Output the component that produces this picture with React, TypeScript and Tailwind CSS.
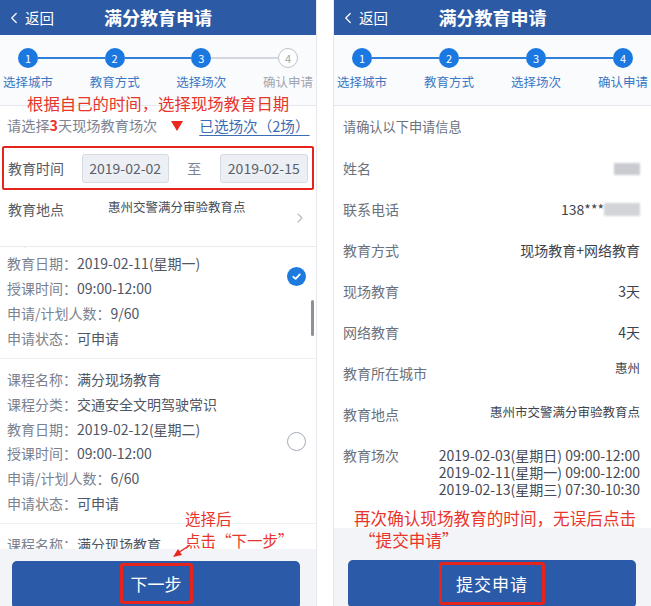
import React from 'react';
import { ChevronLeft, ChevronRight } from 'lucide-react';

const FONT = { fontFamily: '"Noto Sans CJK SC", "Noto Sans", sans-serif' };

const STEPS = ['选择城市', '教育方式', '选择场次', '确认申请'];

function Header() {
  return (
    <div className="relative h-[35px] shrink-0 bg-[#2c5aa5] flex items-center text-white">
      <div className="flex items-center pl-[5px]">
        <ChevronLeft className="w-[18px] h-[18px]" strokeWidth={1.6} />
        <span className="text-[14.5px] ml-[2px]">返回</span>
      </div>
      <div className="absolute inset-0 flex items-center justify-center text-[18px] font-bold pointer-events-none">
        满分教育申请
      </div>
    </div>
  );
}

function Steps({ active }: { active: number }) {
  return (
    <div className="shrink-0 bg-[#fafbfc] border-b border-[#e4e7ec] pt-[13px] pb-[14px]">
      <div className="flex items-center px-[18px]">
        {STEPS.map((_, i) => {
          const on = i < active;
          return (
            <React.Fragment key={i}>
              {i > 0 && (
                <div className={`flex-1 h-[2px] ${on ? 'bg-[#2f80dc]' : 'bg-[#d3d8df]'}`} />
              )}
              <div
                className={`w-[20px] h-[20px] rounded-full flex items-center justify-center text-[11px] leading-none ${
                  on ? 'bg-[#1a78e0] text-white' : 'bg-white border-[1.5px] border-[#bcc3cd] text-[#9ba4b1]'
                }`}
              >
                {i + 1}
              </div>
            </React.Fragment>
          );
        })}
      </div>
      <div className="flex justify-between px-[2px] mt-[5px]">
        {STEPS.map((s, i) => (
          <div
            key={s}
            className={`w-[52px] text-center whitespace-nowrap text-[12.5px] leading-[18px] ${
              i < active ? 'text-[#3c78c5]' : 'text-[#a0a8b4]'
            }`}
          >
            {s}
          </div>
        ))}
      </div>
    </div>
  );
}

type Line = [string, string];

const SESSIONS: { lines: Line[]; checked: boolean }[] = [
  {
    checked: true,
    lines: [
      ['课程名称：', '满分现场教育'],
      ['课程分类：', '交通安全文明驾驶常识'],
      ['教育日期：', '2019-02-11(星期一)'],
      ['授课时间：', '09:00-12:00'],
      ['申请/计划人数：', '9/60'],
      ['申请状态：', '可申请'],
    ],
  },
  {
    checked: false,
    lines: [
      ['课程名称：', '满分现场教育'],
      ['课程分类：', '交通安全文明驾驶常识'],
      ['教育日期：', '2019-02-12(星期二)'],
      ['授课时间：', '09:00-12:00'],
      ['申请/计划人数：', '6/60'],
      ['申请状态：', '可申请'],
    ],
  },
  {
    checked: false,
    lines: [
      ['课程名称：', '满分现场教育'],
      ['课程分类：', '交通安全文明驾驶常识'],
    ],
  },
];

function CheckMark({ checked }: { checked: boolean }) {
  if (checked) {
    return (
      <div className="w-[19px] h-[19px] rounded-full bg-[#1d7be0] flex items-center justify-center">
        <svg width="11" height="11" viewBox="0 0 12 12">
          <path d="M2.5 6.3 L5 8.6 L9.6 3.6" fill="none" stroke="white" strokeWidth="1.9" strokeLinecap="round" strokeLinejoin="round" />
        </svg>
      </div>
    );
  }
  return <div className="w-[19px] h-[19px] rounded-full border-[1.5px] border-[#a3abb8] bg-white" />;
}

function LeftPhone() {
  return (
    <div className="relative w-[317px] h-[606px] shrink-0 overflow-hidden bg-white border-r border-[#e6e8eb] flex flex-col" style={FONT}>
      <Header />
      <Steps active={3} />

      {/* 场次提示 */}
      <div className="h-[40px] shrink-0 flex items-center px-[7px] text-[14.2px] text-[#7d8390]">
        <span className="whitespace-nowrap">
          请选择<span className="text-[#e8352b] font-bold">3</span>天现场教育场次
        </span>
        <svg className="ml-[14px] shrink-0" width="12" height="10" viewBox="0 0 12 10">
          <polygon points="0,0 12,0 6,10" fill="#e8271f" />
        </svg>
        <span className="ml-[16px] text-[14.6px] whitespace-nowrap text-[#3b6db5] underline underline-offset-[3px]">已选场次（2场）</span>
      </div>

      {/* 教育时间 */}
      <div className="h-[44px] shrink-0 mx-[2px] border-2 border-[#e5251d] rounded-[2px] flex items-center px-[4px]">
        <span className="w-[74px] text-[14px] text-[#555b66]">教育时间</span>
        <div className="w-[88px] h-[29px] rounded-[3px] bg-[#eceff4] border border-[#d6dbe3] flex items-center justify-center text-[14px] text-[#5a606b]">
          2019-02-02
        </div>
        <span className="w-[51px] text-center text-[14px] text-[#7d8390]">至</span>
        <div className="w-[89px] h-[29px] rounded-[3px] bg-[#eceff4] border border-[#d6dbe3] flex items-center justify-center text-[14px] text-[#5a606b]">
          2019-02-15
        </div>
      </div>

      {/* 教育地点 */}
      <div className="h-[57px] shrink-0 flex items-center px-[8px] border-b border-[#e8eaee]">
        <span className="w-[100px] text-[14px] text-[#555b66] mb-[17px]">教育地点</span>
        <span className="text-[12.5px] text-[#464b55] mb-[21px]">惠州交警满分审验教育点</span>
        <ChevronRight className="ml-auto w-[16px] h-[16px] text-[#b3b9c2]" strokeWidth={1.6} />
      </div>

      {/* 场次列表 */}
      <div className="relative flex-1 overflow-hidden">
        <div className="-mt-[53px]">
          {SESSIONS.map((s, idx) => (
            <div key={idx} className="flex items-center pl-[7px] pr-[10px] py-[8px] border-b border-[#eef0f3]">
              <div className="flex-1 text-[14px] leading-[24.7px]">
                {s.lines.map(([k, v]) => (
                  <div key={k} className="whitespace-nowrap">
                    <span className="text-[#7b818e]">{k}</span>
                    <span className="text-[#505664]">{v}</span>
                  </div>
                ))}
              </div>
              {s.lines.length > 2 && <CheckMark checked={s.checked} />}
            </div>
          ))}
        </div>
        <div className="absolute right-[2px] top-[53px] w-[3px] h-[36px] rounded-full bg-[#8d9299]" />
      </div>

      {/* 底部按钮 */}
      <div className="h-[57px] shrink-0 bg-[#f3f4f8] pt-[12px] pl-[12px]">
        <div className="w-[288px] h-[48px] rounded-[5px] bg-[#2b5ba8] flex justify-center pt-[2px]">
          <div className="w-[73px] h-[41px] border-[3px] border-[#e5251d] rounded-[3px] flex items-center justify-center text-white text-[17px]">
            下一步
          </div>
        </div>
      </div>

      {/* 标注 */}
      <div className="absolute left-[27px] top-[92px] text-[16.4px] leading-[22px] text-[#e8352b] whitespace-nowrap">
        根据自己的时间，选择现场教育日期
      </div>
      <div className="absolute left-[185px] top-[507px] text-[15.5px] leading-[22px] text-[#e8352b] whitespace-nowrap">
        <div>选择后</div>
        <div>点击“下一步”</div>
      </div>
      <svg className="absolute left-[170px] top-[543px]" width="22" height="16" viewBox="0 0 22 16">
        <line x1="20" y1="2" x2="8" y2="10" stroke="#e8271f" strokeWidth="1.3" />
        <polygon points="3,14 8,6 12,12" fill="#e8271f" />
      </svg>
    </div>
  );
}

const INFO: [string, React.ReactNode][] = [
  ['姓名', <div className="w-[26px] h-[12px] bg-[#c9cbd0] blur-[1px]" />],
  [
    '联系电话',
    <span className="flex items-center">
      138***
      <span className="inline-block w-[36px] h-[13px] bg-[#d2d4d8] blur-[1px]" />
    </span>,
  ],
  ['教育方式', '现场教育+网络教育'],
  ['现场教育', '3天'],
  ['网络教育', '4天'],
  ['教育所在城市', <span className="text-[12.5px] -mt-[10px]">惠州</span>],
  ['教育地点', <span className="text-[12.5px] -mt-[4px]">惠州市交警满分审验教育点</span>],
];

function RightPhone() {
  return (
    <div className="relative w-[318px] h-[606px] shrink-0 overflow-hidden bg-white border-l border-[#e6e8eb] flex flex-col" style={FONT}>
      <Header />
      <Steps active={4} />

      <div className="flex-1 px-[9px] pr-[11px]">
        <div className="h-[42px] flex items-center text-[13.2px] text-[#6b717d]">请确认以下申请信息</div>
        {INFO.map(([k, v]) => (
          <div key={k} className="h-[41px] flex items-center justify-between">
            <span className="text-[14px] text-[#6b717d]">{k}</span>
            <span className="flex items-center text-[14px] text-[#3d424c]">{v}</span>
          </div>
        ))}
        <div className="flex justify-between pt-[12px]">
          <span className="text-[14px] leading-[17px] text-[#6b717d]">教育场次</span>
          <div className="text-[14px] leading-[17px] text-[#454a54] text-right whitespace-nowrap">
            <div>2019-02-03(星期日) 09:00-12:00</div>
            <div>2019-02-11(星期一) 09:00-12:00</div>
            <div>2019-02-13(星期三) 07:30-10:30</div>
          </div>
        </div>
      </div>

      <div className="h-[78px] shrink-0 bg-[#f3f4f8] pt-[32px] pl-[14px]">
        <div className="w-[288px] h-[48px] rounded-[5px] bg-[#2b5ba8] flex justify-center pt-[2px]">
          <div className="w-[106px] h-[43px] border-[3px] border-[#e5251d] rounded-[3px] flex items-center justify-center text-white text-[17px] tracking-[1px]">
            提交申请
          </div>
        </div>
      </div>

      <div className="absolute left-[20px] top-[507px] text-[16.6px] leading-[22px] text-[#e8352b] whitespace-nowrap">
        <div>再次确认现场教育的时间，无误后点击</div>
        <div className="pl-[5px]">“提交申请”</div>
      </div>
    </div>
  );
}

export default function App() {
  return (
    <div className="w-[651px] h-[606px] bg-white flex justify-between overflow-hidden">
      <LeftPhone />
      <RightPhone />
    </div>
  );
}
